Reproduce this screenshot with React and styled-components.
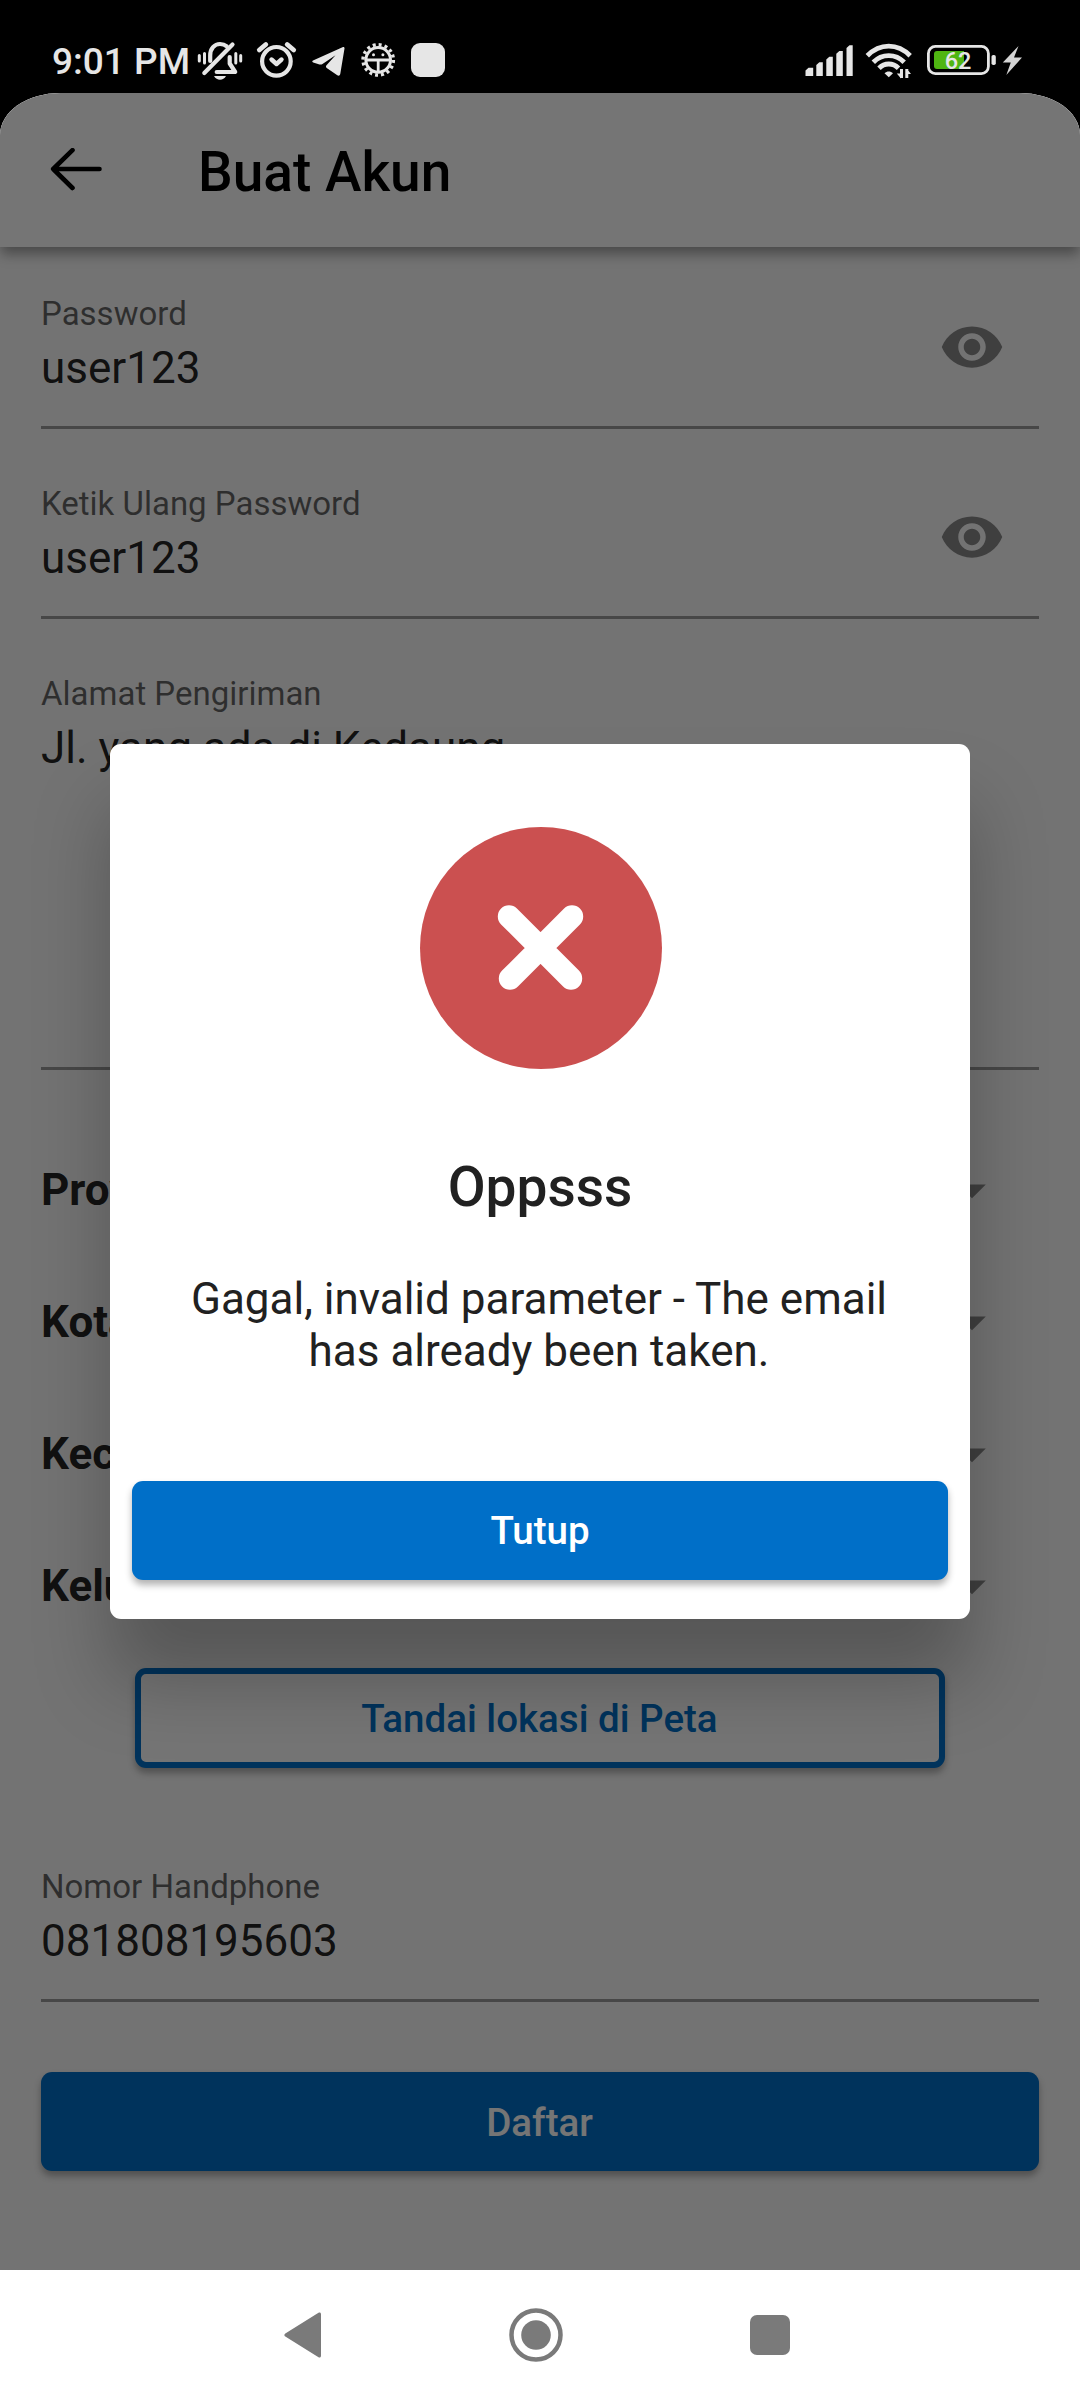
import React from "react";
import styled, { createGlobalStyle } from "styled-components";

const Global = createGlobalStyle`
  *, *::before, *::after { box-sizing: border-box; }
  body { margin: 0; background: #000; }
  button { font: inherit; margin: 0; padding: 0; border: 0; background: none; }
  svg { display: block; flex: none; }
`;

const Screen = styled.div`
  width: 1080px;
  height: 2400px;
  display: flex;
  flex-direction: column;
  background: #000;
  font-family: Roboto, "Noto Sans", sans-serif;
  overflow: hidden;
`;

const StatusBar = styled.div`
  height: 93px;
  flex: none;
  padding: 27px 57px 0 52px;
  display: flex;
  justify-content: space-between;
  color: #e6e6e6;
`;

const StatusGroup = styled.div`
  display: flex;
  height: 66px;
`;

const Clock = styled.span`
  width: 138px;
  font-size: 37px;
  font-weight: 500;
  line-height: 70px;
  white-space: nowrap;
`;

const AppArea = styled.div`
  position: relative;
  flex: none;
  height: 2177px;
  background: #fafafa;
  border-radius: 60px 60px 0 0 / 42px 42px 0 0;
  overflow: hidden;
`;

const Header = styled.header`
  height: 154px;
  display: flex;
  align-items: center;
  padding: 0 50px;
  background: #fff;
  box-shadow: 0 8px 12px -1px rgba(0, 0, 0, 0.36);
`;

const HeaderTitle = styled.h1`
  margin: 3px 0 0 94px;
  font-size: 55px;
  font-weight: 500;
  line-height: 64px;
  color: #000;
`;

const Form = styled.main`
  display: flex;
  flex-direction: column;
  padding: 48px 41px 0;
`;

const Field = styled.div`
  display: flex;
  align-items: center;
  margin-top: ${(p) => p.$gap || 0}px;
  padding-bottom: 32px;
  border-bottom: 3px solid #9b9b9b;
`;

const FieldText = styled.div`
  flex: 1;
`;

const Label = styled.div`
  font-size: 33px;
  line-height: 38px;
  color: rgba(0, 0, 0, 0.6);
`;

const Value = styled.div`
  margin-top: 9px;
  min-height: ${(p) => p.$height || 52}px;
  font-size: 44px;
  line-height: 52px;
  color: rgba(0, 0, 0, 0.87);
`;

const EyeButton = styled.button`
  margin: 5px 34px 0 0;
`;

const SelectList = styled.div`
  margin-top: 54px;
`;

const SelectRow = styled.div`
  height: 132px;
  display: flex;
  align-items: center;
  justify-content: space-between;
  padding-right: 34px;
  font-size: 44px;
  font-weight: 700;
  color: rgba(0, 0, 0, 0.87);
`;

const Button = styled.button`
  height: 99px;
  border-radius: 11px;
  background: #006fc8;
  color: #fff;
  font-size: 38.5px;
  font-weight: 500;
  line-height: 45px;
  box-shadow: 0 5px 7px rgba(0, 0, 0, 0.3);
`;

const SubmitButton = styled(Button)`
  margin-top: 70px;
  padding: 1px 1px 0 0;
`;

const OutlineButton = styled(Button)`
  margin: 16px 94px 0;
  height: 100px;
  padding-right: 1px;
  border: 6px solid #006fc8;
  background: #fff;
  color: #006fc8;
`;

const Overlay = styled.div`
  position: absolute;
  inset: 0;
  display: flex;
  align-items: center;
  justify-content: center;
  background: rgba(0, 0, 0, 0.54);
`;

const Dialog = styled.section`
  width: 860px;
  height: 875px;
  padding: 83px 22px 0;
  display: flex;
  flex-direction: column;
  align-items: stretch;
  border-radius: 11px;
  background: #fff;
  box-shadow: 0 62px 76px rgba(0, 0, 0, 0.25);
  text-align: center;
  color: #212121;

  > svg { align-self: center; margin-left: 1px; }
`;

const DialogTitle = styled.h2`
  margin: 86px 0 0;
  font-size: 55px;
  font-weight: 500;
  line-height: 64px;
`;

const DialogText = styled.p`
  margin: 54px 45px 104px 43px;
  font-size: 44px;
  line-height: 52px;
`;

const NavBar = styled.nav`
  height: 130px;
  flex: none;
  display: flex;
  align-items: center;
  padding-left: 284px;
  background: #fff;
`;

const NavIcon = styled.svg`
  margin-right: ${(p) => p.$after || 0}px;
`;

const StatusIconsLeft = () => (
  <svg width="260" height="66" viewBox="190 27 260 66" fill="#e6e6e6">
    <g stroke="#e6e6e6" fill="none" strokeLinecap="round">
      <path d="M199.300 55.500v5.500M204.500 53.500v9.500M235.800 53.500v9.500M240.700 55.500v5.500" strokeWidth="3" />
      <path d="M204.300 73L232.500 44.500" strokeWidth="4.200" />
      <path d="M210.200 61v-5.500c0-7 4.300-11.500 9.800-11.500 2.800 0 5 .8 6.800 2.300M229.700 57v6.500l5.500 8.500h-18.500" strokeWidth="4.200" strokeLinejoin="round" />
    </g>
    <path d="M214 76h12c-1.500 2.500-3.500 3.800-6 3.800s-4.500-1.300-6-3.800z" />
    <g stroke="#e6e6e6" fill="none" strokeLinecap="round">
      <circle cx="276.400" cy="61.300" r="14.300" strokeWidth="4.200" />
      <path d="M271.500 59.500l5 4.500 5-4.500" strokeWidth="4.400" strokeLinejoin="round" />
      <path d="M259.300 50l6.500-5.500M293.700 50l-6.500-5.500" strokeWidth="4.800" />
    </g>
    <path d="M313 60.500l29.500-13.300c1.300-.5 2.200.2 2 1.400l-4.200 25.200c-.3 1.800-1.700 2.300-3 1.400l-10.600-7.300c-1-.8-1-1.700-.2-2.600l9-10-13 8.700c-1 .6-2 .7-3 .4l-6.300-2c-1.200-.4-1.200-1.300-.2-1.900z" />
    <g fill="none" stroke="#e6e6e6">
      <circle cx="378.200" cy="59.900" r="12.300" strokeWidth="3" />
      <circle cx="378.200" cy="59.900" r="15.200" strokeWidth="3.400" strokeDasharray="2.985 2.984" />
      <path d="M366.500 60h23.500M378.200 60v12" strokeWidth="2.800" />
    </g>
    <circle cx="373.500" cy="54.800" r="1.500" />
    <circle cx="382.900" cy="54.800" r="1.500" />
    <rect x="411" y="43" width="34" height="34" rx="9" />
  </svg>
);

const StatusIconsRight = () => (
  <svg width="223" height="66" viewBox="800 27 223 66" fill="#e6e6e6">
    <path d="M805.500 76v-5.500l3-2.800h4.700V76zM816.300 76V65l3-2.800h3.500V76zM826.300 76V59.500l3-2.800h3.500V76zM836.300 76V53.800l3-2.800h3.500V76zM846.500 76V48l3-2.700h3.200V76z" />
    <g fill="none" stroke="#e6e6e6" strokeWidth="4.800">
      <path d="M867.300 55.800C880 43 897.500 43 910.200 55.800" />
      <path d="M873.300 62.200C882 53.300 895.500 53.300 904.200 62.200" />
      <path d="M879 68.200C884.500 62.600 893 62.600 898.500 68.200" />
    </g>
    <path d="M884.500 73.200c2.500-2.300 6-2.300 8.500 0l-4.200 4z" />
    <path d="M900 69v9h3V69zM896.800 73.500l4.200 5V73.500zM905.300 69v9h3v-9zM907 69v5h4z" />
    <rect x="928.400" y="46.400" width="60" height="27.200" rx="7" fill="none" stroke="#e6e6e6" strokeWidth="2.800" />
    <path d="M937 51h27v18h-27a3 3 0 0 1-3-3V54a3 3 0 0 1 3-3z" fill="#4fb512" />
    <text x="958" y="69.300" textAnchor="middle" fontFamily="Roboto, sans-serif" fontWeight="500" fontSize="23.500">62</text>
    <rect x="991.500" y="55" width="4.300" height="10" rx="1.800" />
    <path d="M1018.500 46l-15.700 16.500h8l-4.500 12.500 15.700-17.500h-8z" fill="#d4d4d4" />
  </svg>
);

const BackArrow = () => (
  <svg width="54" height="44" viewBox="0 0 54 44" fill="none" stroke="#000" strokeWidth="4.600" strokeLinecap="round" strokeLinejoin="round">
    <path d="M49.500 21H4M22.500 2.200L3.200 21l19.300 19" />
  </svg>
);

const Eye = () => (
  <svg width="66" height="66" viewBox="0 0 24 24" fill="rgba(0,0,0,0.45)">
    <path d="M12 4.500C7 4.500 2.730 7.610 1 12c1.730 4.390 6 7.500 11 7.500s9.270-3.110 11-7.500c-1.730-4.390-6-7.500-11-7.500zM12 17c-2.760 0-5-2.240-5-5s2.240-5 5-5 5 2.240 5 5-2.240 5-5 5zm0-8c-1.660 0-3 1.340-3 3s1.340 3 3 3 3-1.340 3-3-1.340-3-3-3z" />
  </svg>
);

const Caret = () => (
  <svg width="66" height="66" viewBox="0 0 24 24" fill="rgba(0,0,0,0.45)">
    <path d="M7 10l5 5 5-5z" />
  </svg>
);

const ErrorMark = () => (
  <svg width="242" height="242" viewBox="0 0 242 242">
    <circle cx="121" cy="121" r="121" fill="#cb5050" />
    <path d="M89 89.500L151 151.500M152 89.500L90 151.500" stroke="#fff" strokeWidth="22.400" strokeLinecap="round" />
  </svg>
);

const areas = ["Provinsi", "Kota", "Kecamatan", "Kelurahan"];

const TextField = ({ label, value, gap, height, secret }) => (
  <Field $gap={gap}>
    <FieldText>
      <Label>{label}</Label>
      <Value $height={height}>{value}</Value>
    </FieldText>
    {secret && (
      <EyeButton aria-label="Lihat password">
        <Eye />
      </EyeButton>
    )}
  </Field>
);

export default function App() {
  return (
    <>
      <Global />
      <Screen>
        <StatusBar>
          <StatusGroup>
            <Clock>9:01 PM</Clock>
            <StatusIconsLeft />
          </StatusGroup>
          <StatusGroup>
            <StatusIconsRight />
          </StatusGroup>
        </StatusBar>
        <AppArea>
          <Header>
            <BackArrow />
            <HeaderTitle>Buat Akun</HeaderTitle>
          </Header>
          <Form>
            <TextField label="Password" value="user123" secret />
            <TextField label="Ketik Ulang Password" value="user123" gap={56} secret />
            <TextField label="Alamat Pengiriman" value="Jl. yang ada di Kedaung" gap={56} height={313} />
            <SelectList>
              {areas.map((name) => (
                <SelectRow key={name}>
                  {name}
                  <Caret />
                </SelectRow>
              ))}
            </SelectList>
            <OutlineButton>Tandai lokasi di Peta</OutlineButton>
            <TextField label="Nomor Handphone" value="081808195603" gap={100} />
            <SubmitButton>Daftar</SubmitButton>
          </Form>
          <Overlay>
            <Dialog role="dialog">
              <ErrorMark />
              <DialogTitle>Oppsss</DialogTitle>
              <DialogText>Gagal, invalid parameter - The email has already been taken.</DialogText>
              <Button>Tutup</Button>
            </Dialog>
          </Overlay>
        </AppArea>
        <NavBar>
          <NavIcon $after={187} width="38" height="46" viewBox="0 0 38 46" fill="#7a7a7a">
            <path d="M34.500.8c1.200-.8 2.500-.2 2.500 1.400v41.600c0 1.600-1.300 2.200-2.500 1.400L1.300 24.600c-1.200-.9-1.200-2.300 0-3.200z" />
          </NavIcon>
          <NavIcon $after={187} width="54" height="54" viewBox="0 0 54 54" fill="#7a7a7a">
            <circle cx="27" cy="27" r="24.500" fill="none" stroke="#7a7a7a" strokeWidth="4.500" />
            <circle cx="27" cy="27" r="14.800" />
          </NavIcon>
          <NavIcon width="40" height="40" viewBox="0 0 40 40" fill="#7a7a7a">
            <rect width="40" height="40" rx="7" />
          </NavIcon>
        </NavBar>
      </Screen>
    </>
  );
}
